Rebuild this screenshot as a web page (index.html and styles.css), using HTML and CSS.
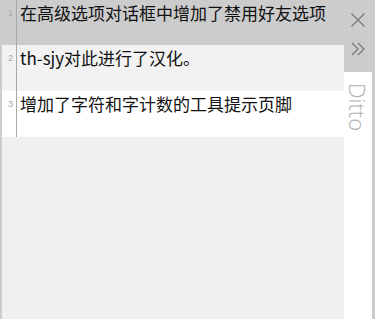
FILE: index.html
```html
<!DOCTYPE html>
<html lang="zh-CN">
<head>
    <meta charset="UTF-8">
    <meta name="viewport" content="width=device-width, initial-scale=1.0">
    <title>Ditto</title>
    <link rel="stylesheet" href="styles.css">
</head>
<body>
    <div class="window">
        <div class="clip-list">
            <div class="clip selected">
                <span class="num">1</span>
                <span class="text">在高级选项对话框中增加了禁用好友选项</span>
            </div>
            <div class="clip alt">
                <span class="num">2</span>
                <span class="text">th-sjy对此进行了汉化。</span>
            </div>
            <div class="clip">
                <span class="num">3</span>
                <span class="text">增加了字符和字计数的工具提示页脚</span>
            </div>
            <div class="empty"></div>
        </div>
        <div class="side">
            <div class="side-buttons">
                <button class="icon-btn close" title="关闭">
                    <svg width="16" height="16" viewBox="0 0 16 16">
                        <path d="M1.5 1.5 L14.5 14.5 M14.5 1.5 L1.5 14.5" stroke="#777" stroke-width="1.2" fill="none"/>
                    </svg>
                </button>
                <button class="icon-btn more" title="更多">
                    <svg width="16" height="16" viewBox="0 0 16 16">
                        <path d="M2 2 L8 8 L2 14 M8 2 L14 8 L8 14" stroke="#777" stroke-width="1.2" fill="none"/>
                    </svg>
                </button>
            </div>
            <div class="brand">Ditto</div>
        </div>
    </div>
</body>
</html>
```

FILE: styles.css
```css
html, body {
    margin: 0;
    padding: 0;
}
body {
    background-color: #cccccc;
    font-family: "Noto Sans CJK SC", "Noto Sans", sans-serif;
}
.window {
    display: flex;
    height: 319px;
    padding: 0 3px 0 2px;
}
.clip-list {
    width: 342px;
    display: flex;
    flex-direction: column;
}
.clip {
    display: flex;
    height: 46px;
    background-color: #ffffff;
}
.clip.selected {
    height: 45px;
    background-color: #cccccc;
}
.clip.alt {
    background-color: #f2f2f2;
}
.num {
    width: 14px;
    box-sizing: border-box;
    padding: 8px 0 0 6px;
    font-family: "Liberation Sans", Arial, sans-serif;
    font-size: 9px;
    line-height: 10px;
    color: #aaaaaa;
}
.text {
    flex: 1;
    border-left: 1px solid #a8a8a8;
    padding: 3px 0 0 3px;
    font-size: 17px;
    line-height: 20px;
    color: #111111;
    white-space: nowrap;
    overflow: hidden;
}
.empty {
    flex: 1;
    background-color: #f0f0f0;
}
.side {
    width: 28px;
    display: flex;
    flex-direction: column;
    background-color: #ffffff;
}
.side-buttons {
    height: 72px;
    background-color: #cccccc;
    display: flex;
    flex-direction: column;
    align-items: center;
    padding-top: 12px;
    box-sizing: border-box;
    gap: 13px;
}
.icon-btn {
    width: 16px;
    height: 16px;
    padding: 0;
    border: none;
    background: none;
    display: block;
    cursor: pointer;
}
.icon-btn svg {
    display: block;
}
.brand {
    writing-mode: vertical-rl;
    font-family: "Open Sans", "Noto Sans", sans-serif;
    font-weight: 300;
    font-size: 22px;
    line-height: 28px;
    color: #b0b0b0;
    padding-top: 11px;
}
```
